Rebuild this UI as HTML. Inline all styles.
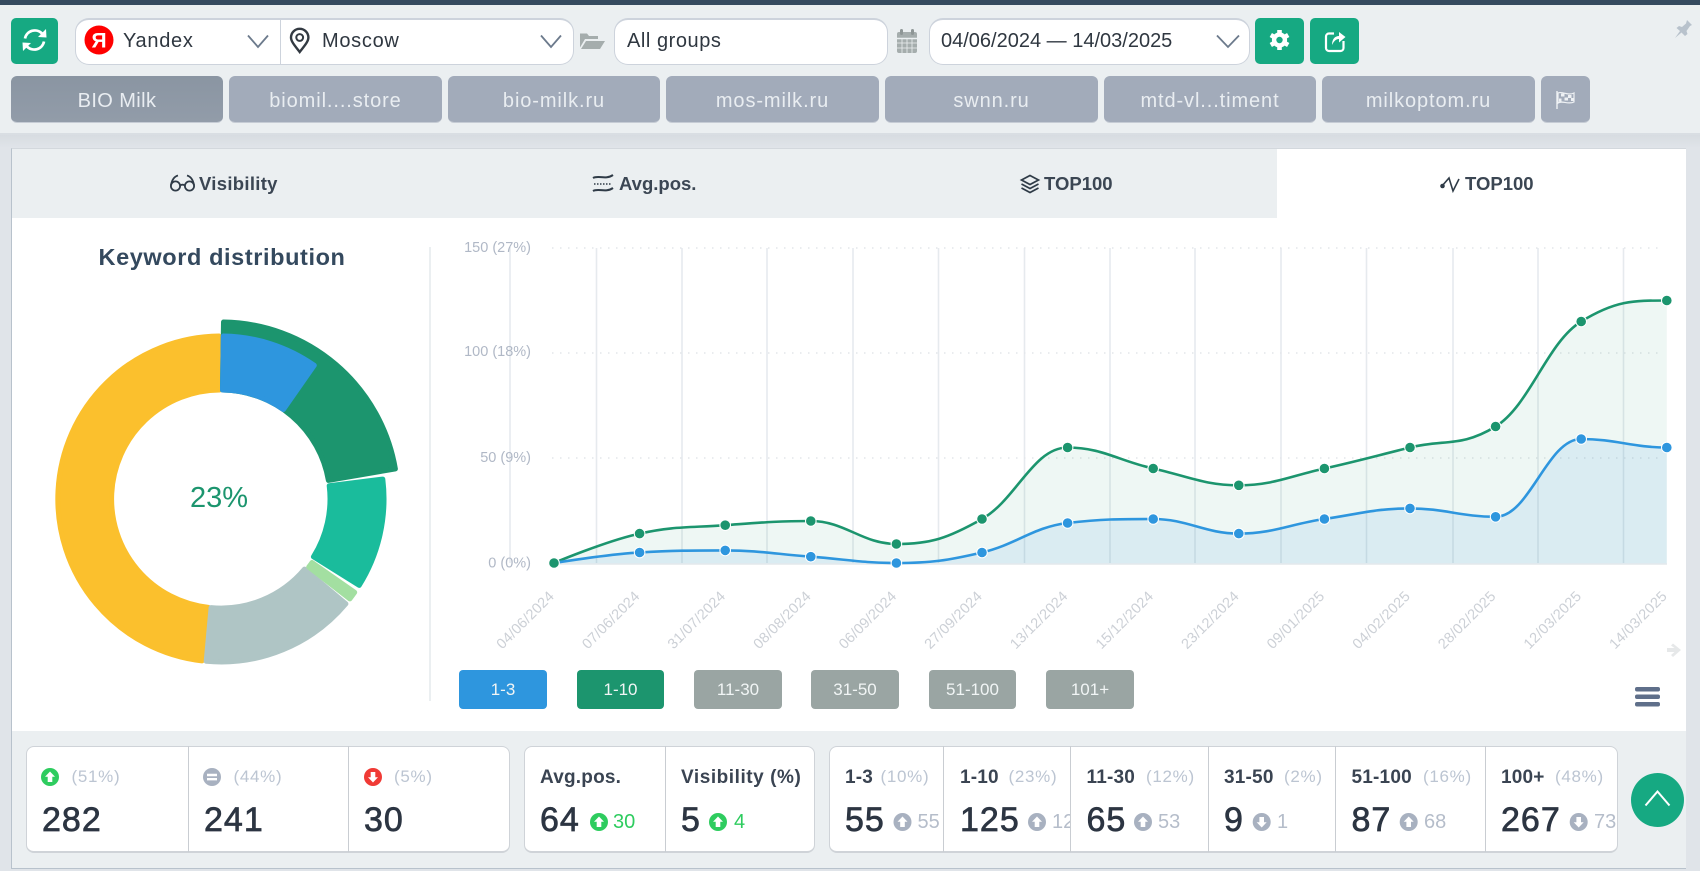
<!DOCTYPE html>
<html>
<head>
<meta charset="utf-8">
<title>Keyword distribution</title>
<style>
html,body{margin:0;padding:0;width:1700px;height:871px;overflow:hidden;background:#e0e4e9;font-family:"Liberation Sans",sans-serif}
.a{position:absolute;box-sizing:border-box}
.t{position:absolute;line-height:1;white-space:nowrap}
.box{position:absolute;box-sizing:border-box;background:#fff;border:1px solid #cdd3dc;border-top-width:2px;border-radius:14px;height:47px;top:18px}
.tab{position:absolute;box-sizing:border-box;top:76px;height:47px;padding-top:4px;background:#a2abba;border-radius:6px;color:#e9edf1;font-size:20px;letter-spacing:.9px;display:flex;align-items:center;justify-content:center;border-bottom:1px solid #c6ccd5}
.rng{position:absolute;box-sizing:border-box;top:670px;height:39px;border-radius:4px;color:#f1f5f5;font-size:17px;display:flex;align-items:center;justify-content:center;background:#9aa5a3}
.card{position:absolute;box-sizing:border-box;top:746px;height:107px;background:#fff;border:1px solid #cfd3d8;border-bottom:2px solid #cfd3d8;border-radius:8px}
.dv{position:absolute;top:746px;height:106px;width:1px;background:#c9cdd2}
.n{position:absolute;top:803px;line-height:1;white-space:nowrap;font-size:34px;letter-spacing:1px;color:#2c3542;-webkit-text-stroke:.7px #2c3542}
.p{position:absolute;top:768px;line-height:1;white-space:nowrap;font-size:17px;letter-spacing:.7px;color:#bcc5d2}
.l{position:absolute;top:768px;line-height:1;white-space:nowrap;font-size:19px;font-weight:700;letter-spacing:.2px;color:#3a4452}
.d{position:absolute;top:812px;line-height:1;white-space:nowrap;font-size:20px;color:#b5bdca;overflow:hidden}
.h{position:absolute;top:175px;line-height:1;white-space:nowrap;font-size:18.5px;font-weight:700;color:#3b4653}
</style>
</head>
<body>
<!-- header -->
<div class="a" style="left:0;top:0;width:1700px;height:135px;background:#ebeff1;border-bottom:2px solid #d9dee3"></div>
<div class="a" style="left:0;top:0;width:1700px;height:5px;background:#354a5f"></div>
<div class="a" style="left:0;top:135px;width:1700px;height:13px;background:linear-gradient(#d7dce1,#e0e4e9)"></div>

<!-- buttons/inputs -->
<div class="a" style="left:11px;top:18px;width:47px;height:46px;background:#16a982;border-radius:5px"></div>
<div class="box" style="left:75px;width:499px"></div>
<div class="a" style="left:280px;top:19px;width:1px;height:45px;background:#cdd3dc"></div>
<div class="box" style="left:614px;width:274px"></div>
<div class="box" style="left:929px;width:321px"></div>
<div class="a" style="left:1255px;top:18px;width:49px;height:46px;background:#16a982;border-radius:5px"></div>
<div class="a" style="left:1310px;top:18px;width:49px;height:46px;background:#16a982;border-radius:5px"></div>

<!-- domain tabs -->
<div class="tab" style="left:11px;width:212px;letter-spacing:.4px;background:linear-gradient(#8a95a2,#929ca9)">BIO Milk</div>
<div class="tab" style="left:229px;width:213px">biomil....store</div>
<div class="tab" style="left:448px;width:212px">bio-milk.ru</div>
<div class="tab" style="left:666px;width:213px">mos-milk.ru</div>
<div class="tab" style="left:885px;width:213px">swnn.ru</div>
<div class="tab" style="left:1104px;width:212px">mtd-vl...timent</div>
<div class="tab" style="left:1322px;width:213px">milkoptom.ru</div>
<div class="tab" style="left:1541px;width:49px"></div>

<!-- panel -->
<div class="a" style="left:11px;top:148px;width:1675px;height:721px;background:#fff;border-left:1px solid #b8c2cc;border-top:1px solid #d3d8dd;border-bottom:1px solid #b8c2cc"></div>
<div class="a" style="left:12px;top:149px;width:1265px;height:69px;background:#ebeff1"></div>
<div class="a" style="left:12px;top:731px;width:1674px;height:137px;background:#ebeff1"></div>
<div class="a" style="left:429px;top:247px;width:2px;height:454px;background:#ebeff1"></div>

<!-- range buttons -->
<div class="rng" style="left:459px;width:88px;background:#2e96de">1-3</div>
<div class="rng" style="left:577px;width:87px;background:#1c956e">1-10</div>
<div class="rng" style="left:694px;width:88px">11-30</div>
<div class="rng" style="left:811px;width:88px">31-50</div>
<div class="rng" style="left:929px;width:87px">51-100</div>
<div class="rng" style="left:1046px;width:88px">101+</div>

<!-- cards -->
<div class="card" style="left:26px;width:484px"></div>
<div class="dv" style="left:188px"></div>
<div class="dv" style="left:348px"></div>
<div class="card" style="left:524px;width:291px"></div>
<div class="dv" style="left:665px"></div>
<div class="card" style="left:829px;width:789px"></div>
<div class="dv" style="left:943px"></div>
<div class="dv" style="left:1070px"></div>
<div class="dv" style="left:1208px"></div>
<div class="dv" style="left:1335px"></div>
<div class="dv" style="left:1485px"></div>

<svg class="a" style="left:0;top:0" width="1700" height="871" viewBox="0 0 1700 871" xmlns="http://www.w3.org/2000/svg">
  <!-- refresh -->
  <g fill="none" stroke="#fff" stroke-width="2.700">
    <path d="M25 38.500A10 10 0 0 1 42 33.500"/>
    <path d="M44 41.500A10 10 0 0 1 27 46.500"/>
  </g>
  <path d="M46 29L46.500 37.500L38 37Z" fill="#fff"/>
  <path d="M23 51L22.500 42.500L31 43Z" fill="#fff"/>
  <!-- yandex -->
  <circle cx="99" cy="40" r="14.500" fill="#f00"/>
  <text x="99" y="47.500" text-anchor="middle" font-family="Liberation Sans, sans-serif" font-weight="700" font-size="21" fill="#fff">Я</text>
  <!-- chevrons -->
  <g fill="none" stroke="#6c7a8c" stroke-width="1.800">
    <path d="M248 35.500L258 47L268 35.500"/>
    <path d="M541 35.500L551 47L561 35.500"/>
    <path d="M1217 35.500L1228 47L1239 35.500"/>
  </g>
  <!-- map pin -->
  <path d="M299.700 52C295 46 291 41.500 291 37.500A8.700 8.700 0 0 1 308.400 37.500C308.400 41.500 304.400 46 299.700 52Z" fill="none" stroke="#333a42" stroke-width="2.400"/>
  <circle cx="299.700" cy="37.500" r="3.400" fill="none" stroke="#333a42" stroke-width="2"/>
  <!-- folder -->
  <path d="M580 33.500h7l2 2.500h9v3h-13l-5 8.500z" fill="#a5adad"/>
  <path d="M586 41h19l-5 8h-19z" fill="#a5adad"/>
  <!-- calendar -->
  <rect x="897" y="32" width="20" height="21" rx="2" fill="#a5adad"/>
  <rect x="900" y="29" width="3" height="6" rx="1.500" fill="#8e9696"/>
  <rect x="911" y="29" width="3" height="6" rx="1.500" fill="#8e9696"/>
  <path d="M897 38.500H917" stroke="#ebeff1" stroke-width="1.400"/>
  <path d="M897 43H917M897 48H917M902 39V53M907 39V53M912 39V53" stroke="#ebeff1" stroke-width=".8"/>
  <!-- gear -->
  <g stroke="#fff" stroke-width="4.600">
    <path d="M1279.500 30V50"/>
    <path d="M1270.800 35L1288.200 45"/>
    <path d="M1270.800 45L1288.200 35"/>
  </g>
  <circle cx="1279.500" cy="40" r="7.600" fill="#fff"/>
  <circle cx="1279.500" cy="40" r="3.200" fill="#16a982"/>
  <!-- share -->
  <path d="M1334 33.500h-5a3 3 0 0 0-3 3v11.500a3 3 0 0 0 3 3h11.500a3 3 0 0 0 3-3v-7" fill="none" stroke="#fff" stroke-width="2.200"/>
  <path d="M1332 45C1332 39 1335 36 1339 36L1339 32L1345.500 37L1339 42.500L1339 39C1336 39 1334 41 1332 45Z" fill="#fff"/>
  <!-- pushpin -->
  <path d="M1687 20L1692 25L1690 26L1686.500 31L1687.500 34L1685 36L1681.500 32.500L1675 38L1680 31L1676.500 28L1679 26L1682 27L1686 23.500Z" fill="#b8c2cc"/>
  <!-- flag -->
  <path d="M1557 91V109" stroke="#eef1f4" stroke-width="1.400"/>
  <path d="M1558 93C1562 91 1568 96 1574 93V102C1568 105 1562 100 1558 103Z" fill="none" stroke="#eef1f4" stroke-width="1.200"/>
  <path d="M1561 93.500h3.500v3h-3.500zM1568 95h3.500v3h-3.500zM1564.500 97.500h3.500v3h-3.500zM1559 98.500h2.500v3h-2.500zM1571 98h2.500v3h-2.500z" fill="#eef1f4"/>
  <!-- tab icons -->
  <g fill="none" stroke="#2f3b47" stroke-width="1.800">
    <circle cx="175.500" cy="186" r="4.600"/>
    <circle cx="189.500" cy="186" r="4.600"/>
    <path d="M180 185.500Q182.500 183.800 185 185.500"/>
    <path d="M171 185C172 180 174 176.500 178 175.500"/>
    <path d="M194 185C193 180 191 176.500 187 175.500"/>
  </g>
  <g fill="none" stroke="#2f3b47">
    <path d="M593 178C598 175 606 180 613 175" stroke-width="2"/>
    <path d="M594 184H612" stroke-width="1.600" stroke-dasharray="1.500 1.500"/>
    <path d="M593 191C598 188 606 193 613 188" stroke-width="2"/>
  </g>
  <g fill="none" stroke="#2f3b47" stroke-width="1.700">
    <path d="M1030 175.500L1038.500 180L1030 184.500L1021.500 180Z"/>
    <path d="M1021.500 184L1030 188.500L1038.500 184"/>
    <path d="M1021.500 188L1030 192.500L1038.500 188"/>
  </g>
  <path d="M1442 186L1449 178L1453 191L1459 179" fill="none" stroke="#2f3b47" stroke-width="1.600"/>
  <circle cx="1442.500" cy="186" r="2.300" fill="#2f3b47"/>

  <!-- donut -->
  <g stroke-width="5" stroke-linejoin="round">
    <path d="M202 660.900A163 163 0 0 1 219 336L219.700 390A109 109 0 0 0 208.300 607.300Z" fill="#fbc02d" stroke="#fbc02d"/>
    <path d="M345.900 603.800A163 163 0 0 1 206.200 661.300L211.100 607.600A109 109 0 0 0 304.500 569.100Z" fill="#afc5c5" stroke="#afc5c5"/>
    <path d="M354.700 592.300A163 163 0 0 1 349.800 598.900L308.700 567A111 111 0 0 0 312 562.500Z" fill="#a3dfa1" stroke="#a3dfa1"/>
    <path d="M382.800 479.100A163 163 0 0 1 359.200 585.400L313.400 556.800A109 109 0 0 0 329.200 485.700Z" fill="#1abc9c" stroke="#1abc9c"/>
    <path d="M223.500 322A177 177 0 0 1 395.400 468.900L328.400 480.400A109 109 0 0 0 222.500 390Z" fill="#1c956e" stroke="#1c956e"/>
    <path d="M223.300 336A163 163 0 0 1 314.300 365.300L283.400 409.600A109 109 0 0 0 222.500 390Z" fill="#2e96de" stroke="#2e96de"/>
  </g>

  <!-- chart grid -->
  <g stroke="#e6eaee" stroke-width="1.600">
    <path d="M510 247V563"/>
    <path d="M596.500 248V563M682 248V563M767 248V563M853 248V563M938.500 248V563M1024.500 248V563M1110 248V563M1195 248V563M1281 248V563M1366.500 248V563M1453 248V563M1538 248V563M1623.500 248V563"/>
  </g>
  <g stroke="#e3e6ea" stroke-width="1.500" stroke-dasharray="1.500 6.500">
    <path d="M552 248H1662M552 353H1662M552 458H1662"/>
  </g>
  <!-- areas -->
  <path d="M554 563C554 563 605.400 541.200 639.600 533.600C673.800 526 691 527.700 725.200 525.200C759.400 522.700 776.600 521 810.800 521C845 521 862.200 544 896.400 544C930.600 544 947.800 538.300 982 519C1016.200 499.700 1033.400 447.500 1067.600 447.500C1101.800 447.500 1119 460.900 1153.200 468.500C1187.400 476.100 1204.600 485.300 1238.800 485.300C1273 485.300 1290.200 476.100 1324.400 468.500C1358.600 460.900 1375.800 455.900 1410 447.500C1444.200 439.100 1461.400 447.500 1495.600 426.500C1529.800 405.500 1547 342.500 1581.200 321.500C1615.400 300.500 1632.600 300.500 1666.800 300.500V564H554Z" fill="#1c956e" fill-opacity=".075"/>
  <path d="M554 563C554 563 605.400 554.600 639.600 552.500C673.800 550.400 691 550.400 725.200 550.400C759.400 550.400 776.600 554.200 810.800 556.700C845 559.200 862.200 563 896.400 563C930.600 563 947.800 560.500 982 552.500C1016.200 544.500 1033.400 527 1067.600 523C1101.800 519 1119 519 1153.200 519C1187.400 519 1204.600 533.600 1238.800 533.600C1273 533.600 1290.200 524 1324.400 519C1358.600 514 1375.800 508.400 1410 508.400C1444.200 508.400 1461.400 516.800 1495.600 516.800C1529.800 516.800 1547 439 1581.200 439C1615.400 439 1632.600 447.500 1666.800 447.500V564H554Z" fill="#2e96de" fill-opacity=".1"/>
  <path d="M554 564H1667" stroke="#e3e8ec" stroke-width="1.500"/>
  <!-- lines -->
  <path d="M554 563C554 563 605.400 541.200 639.600 533.600C673.800 526 691 527.700 725.200 525.200C759.400 522.700 776.600 521 810.800 521C845 521 862.200 544 896.400 544C930.600 544 947.800 538.300 982 519C1016.200 499.700 1033.400 447.500 1067.600 447.500C1101.800 447.500 1119 460.900 1153.200 468.500C1187.400 476.100 1204.600 485.300 1238.800 485.300C1273 485.300 1290.200 476.100 1324.400 468.500C1358.600 460.900 1375.800 455.900 1410 447.500C1444.200 439.100 1461.400 447.500 1495.600 426.500C1529.800 405.500 1547 342.500 1581.200 321.500C1615.400 300.500 1632.600 300.500 1666.800 300.500" fill="none" stroke="#1c956e" stroke-width="2.600"/>
  <path d="M554 563C554 563 605.400 554.600 639.600 552.500C673.800 550.400 691 550.400 725.200 550.400C759.400 550.400 776.600 554.200 810.800 556.700C845 559.200 862.200 563 896.400 563C930.600 563 947.800 560.500 982 552.500C1016.200 544.500 1033.400 527 1067.600 523C1101.800 519 1119 519 1153.200 519C1187.400 519 1204.600 533.600 1238.800 533.600C1273 533.600 1290.200 524 1324.400 519C1358.600 514 1375.800 508.400 1410 508.400C1444.200 508.400 1461.400 516.800 1495.600 516.800C1529.800 516.800 1547 439 1581.200 439C1615.400 439 1632.600 447.500 1666.800 447.500" fill="none" stroke="#2e96de" stroke-width="2.600"/>
  <!-- markers -->
  <g fill="#2e96de" stroke="#fff" stroke-width="1">
    <circle cx="639.600" cy="552.500" r="5.300"/><circle cx="725.200" cy="550.400" r="5.300"/><circle cx="810.800" cy="556.700" r="5.300"/><circle cx="896.400" cy="563" r="5.300"/><circle cx="982" cy="552.500" r="5.300"/><circle cx="1067.600" cy="523" r="5.300"/><circle cx="1153.200" cy="519" r="5.300"/><circle cx="1238.800" cy="533.600" r="5.300"/><circle cx="1324.400" cy="519" r="5.300"/><circle cx="1410" cy="508.400" r="5.300"/><circle cx="1495.600" cy="516.800" r="5.300"/><circle cx="1581.200" cy="439" r="5.300"/><circle cx="1666.800" cy="447.500" r="5.300"/>
  </g>
  <g fill="#1c956e" stroke="#fff" stroke-width="1">
    <circle cx="554" cy="563" r="5.300"/><circle cx="639.600" cy="533.600" r="5.300"/><circle cx="725.200" cy="525.200" r="5.300"/><circle cx="810.800" cy="521" r="5.300"/><circle cx="896.400" cy="544" r="5.300"/><circle cx="982" cy="519" r="5.300"/><circle cx="1067.600" cy="447.500" r="5.300"/><circle cx="1153.200" cy="468.500" r="5.300"/><circle cx="1238.800" cy="485.300" r="5.300"/><circle cx="1324.400" cy="468.500" r="5.300"/><circle cx="1410" cy="447.500" r="5.300"/><circle cx="1495.600" cy="426.500" r="5.300"/><circle cx="1581.200" cy="321.500" r="5.300"/><circle cx="1666.800" cy="300.500" r="5.300"/>
  </g>
  <!-- y labels -->
  <g font-family="Liberation Sans, sans-serif" font-size="14.500" fill="#b0b8c6" text-anchor="end">
    <text x="531" y="252">150 (27%)</text>
    <text x="531" y="356">100 (18%)</text>
    <text x="531" y="462">50 (9%)</text>
    <text x="531" y="567.500">0 (0%)</text>
  </g>
  <!-- x labels -->
  <g font-family="Liberation Sans, sans-serif" font-size="14.500" fill="#ccd0d6" text-anchor="end" letter-spacing=".2">
    <text transform="translate(555,597) rotate(-45)">04/06/2024</text>
    <text transform="translate(640.600,597) rotate(-45)">07/06/2024</text>
    <text transform="translate(726.200,597) rotate(-45)">31/07/2024</text>
    <text transform="translate(811.800,597) rotate(-45)">08/08/2024</text>
    <text transform="translate(897.400,597) rotate(-45)">06/09/2024</text>
    <text transform="translate(983,597) rotate(-45)">27/09/2024</text>
    <text transform="translate(1068.600,597) rotate(-45)">13/12/2024</text>
    <text transform="translate(1154.200,597) rotate(-45)">15/12/2024</text>
    <text transform="translate(1239.800,597) rotate(-45)">23/12/2024</text>
    <text transform="translate(1325.400,597) rotate(-45)">09/01/2025</text>
    <text transform="translate(1411,597) rotate(-45)">04/02/2025</text>
    <text transform="translate(1496.600,597) rotate(-45)">28/02/2025</text>
    <text transform="translate(1582.200,597) rotate(-45)">12/03/2025</text>
    <text transform="translate(1667.800,597) rotate(-45)">14/03/2025</text>
  </g>
  <!-- arrow, hamburger -->
  <path d="M1673 643.500L1681 650L1673 657L1671 655L1674.500 652H1667V648H1674.500L1671 645.500Z" fill="#e6e8e9"/>
  <rect x="1635" y="687" width="25" height="4.500" rx="2" fill="#5f6f8a"/>
  <rect x="1635" y="694.500" width="25" height="4.500" rx="2" fill="#5f6f8a"/>
  <rect x="1635" y="702" width="25" height="4.500" rx="2" fill="#5f6f8a"/>

  <!-- stat icons -->
  <g transform="translate(41,768)"><circle cx="9" cy="9" r="9" fill="#2ecc5f"/><path d="M9 3.500L14 8.800H11.300V14H6.700V8.800H4Z" fill="#fff"/></g>
  <g transform="translate(203,768)"><circle cx="9" cy="9" r="9" fill="#a8b1c0"/><path d="M4 5.800H14V8.200H4ZM4 10H14V12.400H4Z" fill="#fff"/></g>
  <g transform="translate(364,768)"><circle cx="9" cy="9" r="9" fill="#f03a35"/><path d="M9 14.500L14 9.200H11.300V4H6.700V9.200H4Z" fill="#fff"/></g>
  <g transform="translate(590,813)"><circle cx="9" cy="9" r="9" fill="#2ecc5f"/><path d="M9 3.500L14 8.800H11.300V14H6.700V8.800H4Z" fill="#fff"/></g>
  <g transform="translate(709,813)"><circle cx="9" cy="9" r="9" fill="#2ecc5f"/><path d="M9 3.500L14 8.800H11.300V14H6.700V8.800H4Z" fill="#fff"/></g>
  <g transform="translate(893.500,813)"><circle cx="9" cy="9" r="9" fill="#a8b1c0"/><path d="M9 3.500L14 8.800H11.300V14H6.700V8.800H4Z" fill="#fff"/></g>
  <g transform="translate(1028,813)"><circle cx="9" cy="9" r="9" fill="#a8b1c0"/><path d="M9 3.500L14 8.800H11.300V14H6.700V8.800H4Z" fill="#fff"/></g>
  <g transform="translate(1134,813)"><circle cx="9" cy="9" r="9" fill="#a8b1c0"/><path d="M9 3.500L14 8.800H11.300V14H6.700V8.800H4Z" fill="#fff"/></g>
  <g transform="translate(1252.700,813)"><circle cx="9" cy="9" r="9" fill="#a8b1c0"/><path d="M9 14.500L14 9.200H11.300V4H6.700V9.200H4Z" fill="#fff"/></g>
  <g transform="translate(1399.700,813)"><circle cx="9" cy="9" r="9" fill="#a8b1c0"/><path d="M9 3.500L14 8.800H11.300V14H6.700V8.800H4Z" fill="#fff"/></g>
  <g transform="translate(1569.700,813)"><circle cx="9" cy="9" r="9" fill="#a8b1c0"/><path d="M9 14.500L14 9.200H11.300V4H6.700V9.200H4Z" fill="#fff"/></g>

  <!-- scroll top -->
  <ellipse cx="1657.500" cy="800" rx="26.500" ry="27" fill="#16a982"/>
  <path d="M1645.500 805.500L1657.500 791.500L1669.500 805.500" fill="none" stroke="#fff" stroke-width="2"/>
</svg>

<!-- header text -->
<div class="t" style="left:123px;top:31px;font-size:20px;letter-spacing:.7px;color:#2f3740">Yandex</div>
<div class="t" style="left:322px;top:31px;font-size:20px;letter-spacing:.7px;color:#2f3740">Moscow</div>
<div class="t" style="left:627px;top:31px;font-size:20px;letter-spacing:.55px;color:#2f3740">All groups</div>
<div class="t" style="left:941px;top:31px;font-size:20px;color:#2f3740">04/06/2024 — 14/03/2025</div>

<!-- panel tab labels -->
<div class="h" style="left:199px;letter-spacing:.3px">Visibility</div>
<div class="h" style="left:619px">Avg.pos.</div>
<div class="h" style="left:1044px">TOP100</div>
<div class="h" style="left:1465px">TOP100</div>

<div class="t" style="left:98.500px;top:246px;font-size:23.500px;letter-spacing:.6px;font-weight:700;color:#34495e">Keyword distribution</div>
<div class="t" style="left:190px;top:484px;font-size:29px;color:#1c956e">23%</div>

<!-- card 1 -->
<div class="p" style="left:71.500px">(51%)</div><div class="n" style="left:42px">282</div>
<div class="p" style="left:233.500px">(44%)</div><div class="n" style="left:204px">241</div>
<div class="p" style="left:394px">(5%)</div><div class="n" style="left:364px">30</div>
<!-- card 2 -->
<div class="l" style="left:540px">Avg.pos.</div><div class="n" style="left:540px">64</div><div class="d" style="left:613px;color:#2ecc5f">30</div>
<div class="l" style="left:681px;letter-spacing:.55px">Visibility (%)</div><div class="n" style="left:681px">5</div><div class="d" style="left:734px;color:#2ecc5f">4</div>
<!-- card 3 -->
<div class="l" style="left:845px">1-3</div><div class="p" style="left:880.500px">(10%)</div><div class="n" style="left:845px">55</div><div class="d" style="left:917.500px;width:25px">55</div>
<div class="l" style="left:960px">1-10</div><div class="p" style="left:1008.500px">(23%)</div><div class="n" style="left:960px">125</div><div class="d" style="left:1052px;width:18px">125</div>
<div class="l" style="left:1086.500px">11-30</div><div class="p" style="left:1146px">(12%)</div><div class="n" style="left:1086.500px">65</div><div class="d" style="left:1158px">53</div>
<div class="l" style="left:1224px">31-50</div><div class="p" style="left:1284px">(2%)</div><div class="n" style="left:1224px">9</div><div class="d" style="left:1277px">1</div>
<div class="l" style="left:1351.500px">51-100</div><div class="p" style="left:1423px">(16%)</div><div class="n" style="left:1351.500px">87</div><div class="d" style="left:1424px">68</div>
<div class="l" style="left:1501px">100+</div><div class="p" style="left:1555px">(48%)</div><div class="n" style="left:1501px">267</div><div class="d" style="left:1594px;width:23px">73</div>
</body>
</html>
